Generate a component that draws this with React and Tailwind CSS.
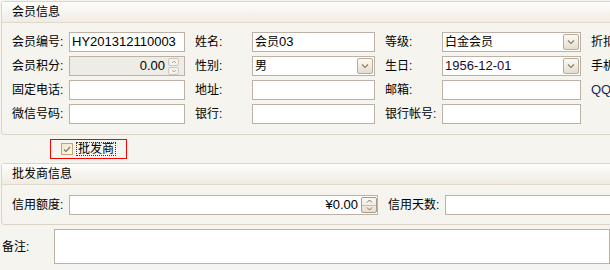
import React from "react";

const F = "font-['Liberation_Sans','Noto_Sans_CJK_SC',sans-serif]";

function Label({ children, className = "w-[57px]" }) {
  return (
    <div className={`${className} shrink-0 text-[12px] leading-[20px] text-black whitespace-nowrap`}>
      {children}
    </div>
  );
}

function DropBtn() {
  return (
    <div className="w-[16px] h-[16px] mr-[1px] shrink-0 rounded-[2px] border border-[#b9ab98] bg-gradient-to-b from-[#fbfaf6] to-[#e4ddcd] flex items-center justify-center">
      <svg width="8" height="6" viewBox="0 0 8 6">
        <path d="M1 1.5 L4 4.5 L7 1.5" fill="none" stroke="#8c7f6e" strokeWidth="1.2" />
      </svg>
    </div>
  );
}

function SpinSmall() {
  return (
    <div className="w-[11px] h-[17px] mr-[5px] shrink-0 flex flex-col gap-[1px]">
      <div className="flex-1 rounded-[2px] border border-[#cfc7bb] bg-[#f4f2ec] flex items-center justify-center">
        <svg width="6" height="4" viewBox="0 0 6 4"><path d="M1 3 L3 1 L5 3" fill="none" stroke="#b4aca0" strokeWidth="1" /></svg>
      </div>
      <div className="flex-1 rounded-[2px] border border-[#cfc7bb] bg-[#f4f2ec] flex items-center justify-center">
        <svg width="6" height="4" viewBox="0 0 6 4"><path d="M1 1 L3 3 L5 1" fill="none" stroke="#b4aca0" strokeWidth="1" /></svg>
      </div>
    </div>
  );
}

function SpinBig() {
  return (
    <div className="w-[16px] h-[16px] shrink-0 rounded-[2px] border border-[#a99b88] bg-gradient-to-b from-[#fbfaf6] to-[#e6dfd0] flex flex-col">
      <div className="flex-1 flex items-center justify-center border-b border-[#c9bfae]">
        <svg width="7" height="4" viewBox="0 0 7 4"><path d="M1 3.5 L3.5 1 L6 3.5" fill="none" stroke="#7d7160" strokeWidth="1" /></svg>
      </div>
      <div className="flex-1 flex items-center justify-center">
        <svg width="7" height="4" viewBox="0 0 7 4"><path d="M1 0.5 L3.5 3 L6 0.5" fill="none" stroke="#7d7160" strokeWidth="1" /></svg>
      </div>
    </div>
  );
}

function Box({ className, children }) {
  return (
    <div className={`${className} h-[20px] shrink-0 border border-[#bcb1a4] flex items-center text-[13px] text-black whitespace-nowrap overflow-hidden`}>
      {children}
    </div>
  );
}

function PanelHeader({ title }) {
  return (
    <div className="h-[21px] border-b border-[#e0d9cb] bg-gradient-to-b from-[#fdfdfb] to-[#efece3] pl-[10px] text-[12px] leading-[20px] text-black">
      {title}
    </div>
  );
}

export default function App() {
  return (
    <div className={`w-[610px] h-[270px] overflow-hidden bg-[#f5f4ef] ${F}`}>
      <div className="pl-[1px] pt-[1px]">
        {/* Panel 1 */}
        <div className="w-[660px] border border-[#dcd5c7] rounded-[3px] bg-[#f5f4ef]">
          <PanelHeader title="会员信息" />
          <div className="pl-[10px] pt-[9px] pb-[10px] flex flex-col gap-[4px]">
            <div className="flex items-center">
              <Label>会员编号:</Label>
              <Box className="w-[116px] bg-white pl-[2px]">HY201312110003</Box>
              <div className="w-[10px]" />
              <Label>姓名:</Label>
              <Box className="w-[123px] bg-white pl-[2px]"><span className="text-[12px]">会员</span>03</Box>
              <div className="w-[10px]" />
              <Label>等级:</Label>
              <Box className="w-[139px] bg-white pl-[2px]"><span className="flex-1 text-[12px]">白金会员</span><DropBtn /></Box>
              <div className="w-[10px]" />
              <Label>折扣:</Label>
            </div>
            <div className="flex items-center">
              <Label>会员积分:</Label>
              <Box className="w-[116px] bg-[#eeece6]"><span className="flex-1 text-right pr-[3px]">0.00</span><SpinSmall /></Box>
              <div className="w-[10px]" />
              <Label>性别:</Label>
              <Box className="w-[123px] bg-white pl-[2px]"><span className="flex-1 text-[12px]">男</span><DropBtn /></Box>
              <div className="w-[10px]" />
              <Label>生日:</Label>
              <Box className="w-[139px] bg-white pl-[2px]"><span className="flex-1 text-[#1c0a30]">1956-12-01</span><DropBtn /></Box>
              <div className="w-[10px]" />
              <Label>手机:</Label>
            </div>
            <div className="flex items-center">
              <Label>固定电话:</Label>
              <Box className="w-[116px] bg-white" />
              <div className="w-[10px]" />
              <Label>地址:</Label>
              <Box className="w-[123px] bg-white" />
              <div className="w-[10px]" />
              <Label>邮箱:</Label>
              <Box className="w-[139px] bg-white" />
              <div className="w-[10px]" />
              <Label><span className="text-[13px] text-[#1a2450]">QQ</span></Label>
            </div>
            <div className="flex items-center">
              <Label>微信号码:</Label>
              <Box className="w-[116px] bg-white" />
              <div className="w-[10px]" />
              <Label>银行:</Label>
              <Box className="w-[123px] bg-white" />
              <div className="w-[10px]" />
              <Label>银行帐号:</Label>
              <Box className="w-[139px] bg-white" />
            </div>
          </div>
        </div>

        {/* Checkbox row */}
        <div className="h-[28px] flex items-center pl-[49px]">
          <div className="w-[77px] h-[20px] border border-[#ff0000] flex items-center pl-[10px]">
            <div className="w-[12px] h-[12px] border border-[#c4a46e] bg-gradient-to-br from-[#f3e6c8] to-[#fdfaf0] flex items-center justify-center">
              <svg width="8" height="7" viewBox="0 0 8 7"><path d="M1 3.5 L3 5.5 L7 1" fill="none" stroke="#8b8276" strokeWidth="1.4" /></svg>
            </div>
            <div className="ml-[3px] h-[14px] border border-dotted border-[#333] text-[12px] leading-[12px] px-[1px] flex items-center">批发商</div>
          </div>
        </div>

        {/* Panel 2 */}
        <div className="w-[660px] border border-[#dcd5c7] rounded-[3px] bg-[#f5f4ef]">
          <PanelHeader title="批发商信息" />
          <div className="pl-[10px] pt-[10px] pb-[9px] flex items-center">
            <Label>信用额度:</Label>
            <Box className="w-[309px] bg-white"><span className="flex-1 text-right pr-[3px]">¥0.00</span><SpinBig /></Box>
            <div className="w-[10px]" />
            <Label>信用天数:</Label>
            <Box className="w-[200px] bg-white" />
          </div>
        </div>
      </div>

      {/* Remark */}
      <div className="flex items-center mt-[4px]">
        <div className="w-[58px] pl-[2px] text-[12px] text-black">备注:</div>
        <div className="w-[600px] h-[35px] border border-[#bcb1a4] bg-white" />
      </div>
    </div>
  );
}
